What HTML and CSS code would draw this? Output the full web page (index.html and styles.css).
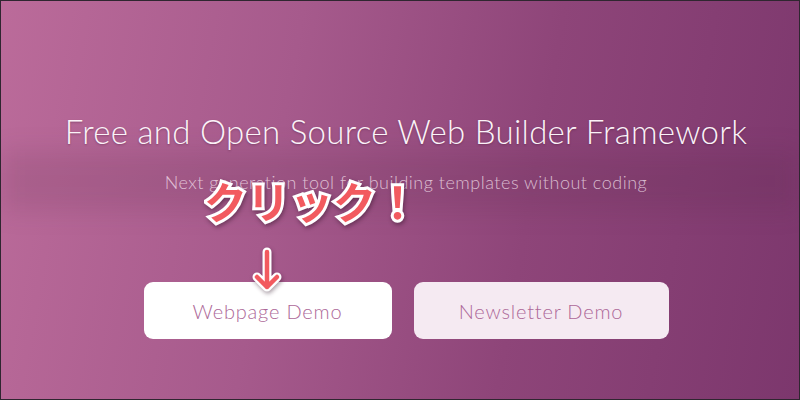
FILE: index.html
```html
<!DOCTYPE html>
<html lang="ja">
<head>
  <meta charset="UTF-8">
  <title>Web Builder Framework</title>
  <link rel="stylesheet" href="styles.css">
</head>
<body>

<div class="hero">
  <div class="band"></div>
  <h1 class="title">Free and Open Source Web Builder Framework</h1>
  <p class="subtitle">Next generation tool for building templates without coding</p>
  <div class="buttons">
    <a class="btn btn-main" href="#">Webpage Demo</a>
    <a class="btn btn-alt" href="#">Newsletter Demo</a>
  </div>

  <div class="note">クリック！</div>
  <svg class="arrow" width="32" height="48" viewBox="0 0 32 48">
    <g fill="none" stroke-linecap="round" stroke-linejoin="round">
      <path d="M16 5 V40 M6 30 L16 40 L26 30" stroke="#fff" stroke-width="9"/>
      <path d="M16 5 V40 M6 30 L16 40 L26 30" stroke="#f25a5f" stroke-width="4.5"/>
    </g>
  </svg>
</div>

</body>
</html>
```

FILE: styles.css
```css
body { margin: 0; }
.hero {
  position: relative;
  box-sizing: border-box;
  width: 800px;
  height: 400px;
  padding-left: 12px;
  border: 1px solid #2f2630;
  overflow: hidden;
  display: flex;
  flex-direction: column;
  align-items: center;
  background: linear-gradient(100deg, #bb6b9a 0%, #a65a8c 35%, #8e4579 65%, #7c376d 100%);
  font-family: Lato, "Noto Sans", sans-serif;
  font-weight: 300;
}
.band {
  position: absolute;
  left: 0;
  right: 0;
  top: 150px;
  height: 60px;
  background: rgba(70, 30, 60, 0.12);
  filter: blur(12px);
}
.title {
  position: relative;
  margin: 110px 0 0;
  font-size: 33px;
  font-weight: 300;
  color: #fbf3f8;
  letter-spacing: 0.3px;
  text-shadow: 0 1px 2px rgba(60, 20, 50, 0.35);
}
.subtitle {
  position: relative;
  margin: 20px 0 0;
  font-size: 18px;
  color: rgba(255, 240, 250, 0.7);
  letter-spacing: 0.5px;
}
.buttons {
  position: relative;
  display: flex;
  gap: 22px;
  margin-top: 89px;
}
.btn {
  display: flex;
  align-items: center;
  justify-content: center;
  height: 57px;
  border-radius: 9px;
  font-size: 20px;
  letter-spacing: 0.8px;
  color: #ad6898;
  text-decoration: none;
}
.btn-main { width: 248px; background: #fff; }
.btn-alt { width: 255px; background: #f5eaf2; }
.note {
  position: absolute;
  left: 203px;
  top: 168px;
  font-family: "Noto Sans CJK JP", sans-serif;
  font-weight: 700;
  font-size: 43px;
  color: #f25a5f;
  -webkit-text-stroke: 6px #fff;
  paint-order: stroke fill;
  filter: drop-shadow(1px 2px 2px rgba(40, 10, 30, 0.45));
}
.arrow {
  position: absolute;
  left: 250px;
  top: 246px;
  filter: drop-shadow(1px 2px 2px rgba(40, 10, 30, 0.4));
}
```
